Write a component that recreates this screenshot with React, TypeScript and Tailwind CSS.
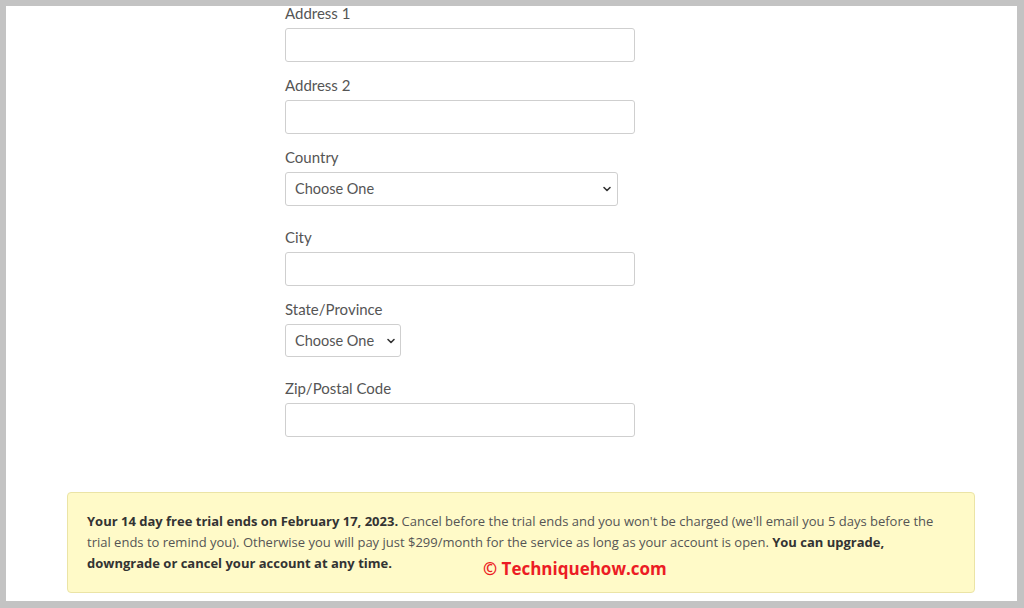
import React from "react";

const Chevron = () => (
  <svg width="10" height="10" viewBox="0 0 10 10" className="shrink-0">
    <path d="M2 3.5 L5 6.5 L8 3.5" fill="none" stroke="#333" strokeWidth="1.6" strokeLinecap="round" strokeLinejoin="round" />
  </svg>
);

const Label = ({ children }: { children: React.ReactNode }) => (
  <div className="h-[20px] leading-[20px] text-[15px] text-[#555] mb-[5px]">{children}</div>
);

const Input = ({ mb = "mb-[13px]" }: { mb?: string }) => (
  <div className={`h-[34px] w-[350px] rounded-[3px] border border-[#cfcfcf] bg-white ${mb}`} />
);

export default function App() {
  return (
    <div className="w-[1024px] h-[608px] bg-[#c3c3c3] pt-[6px] pl-[6px] pr-[7px] pb-[7px]" style={{ fontFamily: "Lato, 'Open Sans', sans-serif" }}>
      <div className="w-full h-full bg-white overflow-hidden flex flex-col">
        <div className="ml-[279px] mt-[-3px] flex flex-col">
          <Label>Address 1</Label>
          <Input />
          <Label>Address 2</Label>
          <Input />
          <Label>Country</Label>
          <div className="h-[34px] w-[333px] rounded-[3px] border border-[#cfcfcf] bg-white mb-[21px] flex items-center justify-between pl-[9px] pr-[5px]">
            <span className="text-[14.5px] text-[#555]">Choose One</span>
            <Chevron />
          </div>
          <Label>City</Label>
          <Input />
          <Label>State/Province</Label>
          <div className="h-[33px] w-[116px] rounded-[3px] border border-[#cfcfcf] bg-white mb-[21px] flex items-center justify-between pl-[9px] pr-[4px]">
            <span className="text-[14.5px] text-[#555]">Choose One</span>
            <Chevron />
          </div>
          <Label>Zip/Postal Code</Label>
          <Input mb="mb-0" />
        </div>
        <div className="relative mt-[55px] ml-[61px] w-[908px] h-[101px] rounded-[4px] border border-[#ebe4a6] bg-[#fffac8] pl-[19px] pr-[34px] py-[18px] text-[13px] leading-[21px] text-[#555]" style={{ fontFamily: "'Open Sans', sans-serif" }}>
          <p>
            <b className="font-bold text-[#333]">Your 14 day free trial ends on February 17, 2023.</b> Cancel before the trial ends and you won't be charged (we'll email you 5 days before the trial ends to remind you). Otherwise you will pay just $299/month for the service as long as your account is open. <b className="font-bold text-[#333]">You can upgrade, downgrade or cancel your account at any time.</b>
          </p>
          <div className="absolute left-[415px] top-[65px] text-[17px] font-bold text-[#ec1c24] leading-[22px]">
            © Techniquehow.com
          </div>
        </div>
      </div>
    </div>
  );
}
